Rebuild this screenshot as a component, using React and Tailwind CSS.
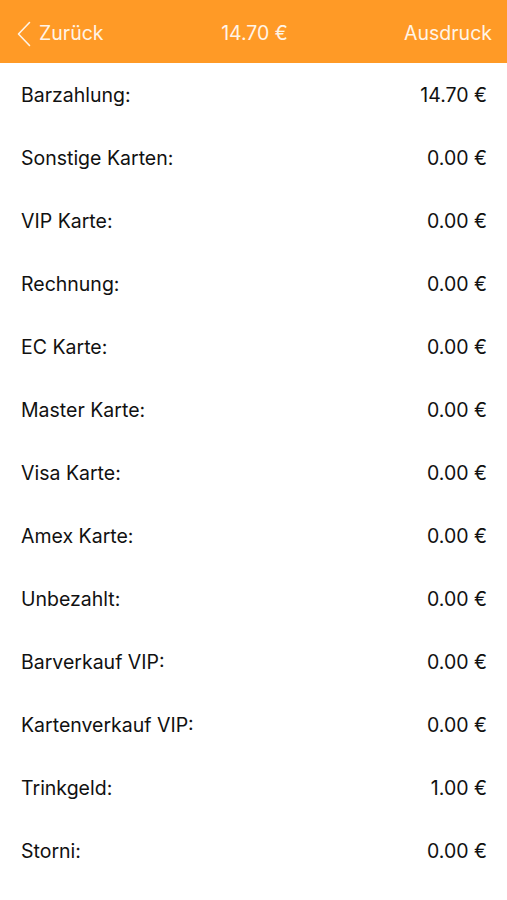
import React from "react";

const rows = [
  ["Barzahlung:", "14.70 €"],
  ["Sonstige Karten:", "0.00 €"],
  ["VIP Karte:", "0.00 €"],
  ["Rechnung:", "0.00 €"],
  ["EC Karte:", "0.00 €"],
  ["Master Karte:", "0.00 €"],
  ["Visa Karte:", "0.00 €"],
  ["Amex Karte:", "0.00 €"],
  ["Unbezahlt:", "0.00 €"],
  ["Barverkauf VIP:", "0.00 €"],
  ["Kartenverkauf VIP:", "0.00 €"],
  ["Trinkgeld:", "1.00 €"],
  ["Storni:", "0.00 €"],
];

export default function App() {
  return (
    <div className="w-[507px] h-[900px] bg-white overflow-hidden font-['Inter',sans-serif]">
      <div className="h-[63px] bg-[#ff9a26] flex items-center justify-between pt-[4px] pl-[17px] pr-[15px] text-[19.5px] text-[#fff4e6]">
        <div className="flex items-center gap-[8px] w-[140px]">
          <svg width="14" height="26" viewBox="0 0 14 26" fill="none">
            <path d="M12.5 1.5 L1.5 13 L12.5 24.5" stroke="#fff4e6" strokeWidth="1.6" strokeLinecap="round" strokeLinejoin="round" />
          </svg>
          <span>Zurück</span>
        </div>
        <div>14.70 €</div>
        <div className="w-[140px] text-right">Ausdruck</div>
      </div>
      <div className="pt-[1px]">
        {rows.map(([label, value], i) => (
          <div key={i} className="h-[63px] flex items-center justify-between pl-[21px] pr-[20px] text-[19.5px] text-[#111]">
            <span>{label}</span>
            <span>{value}</span>
          </div>
        ))}
      </div>
    </div>
  );
}
